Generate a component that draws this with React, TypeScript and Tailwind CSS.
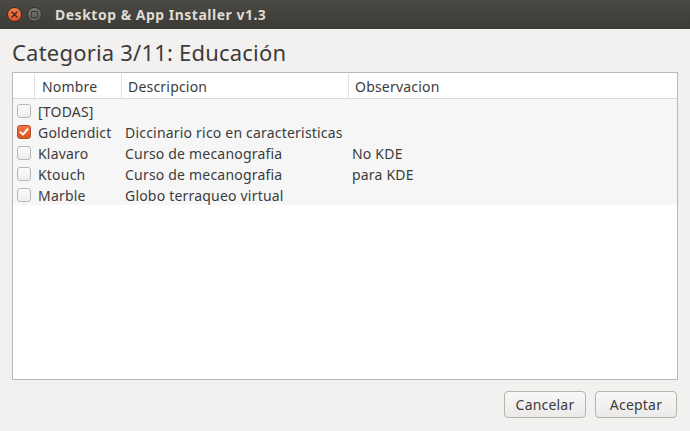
import { useState } from 'react'

type Row = { name: string; desc: string; obs: string; checked: boolean }

const initialRows: Row[] = [
  { name: '[TODAS]', desc: '', obs: '', checked: false },
  { name: 'Goldendict', desc: 'Diccinario rico en caracteristicas', obs: '', checked: true },
  { name: 'Klavaro', desc: 'Curso de mecanografia', obs: 'No KDE', checked: false },
  { name: 'Ktouch', desc: 'Curso de mecanografia', obs: 'para KDE', checked: false },
  { name: 'Marble', desc: 'Globo terraqueo virtual', obs: '', checked: false },
]

function CheckBox({ checked, onClick }: { checked: boolean; onClick: () => void }) {
  if (checked) {
    return (
      <button
        onClick={onClick}
        className="w-[14px] h-[14px] rounded-[3px] border border-[#b5502a] bg-gradient-to-b from-[#f07746] to-[#d9531e] flex items-center justify-center"
      >
        <svg width="10" height="10" viewBox="0 0 10 10">
          <path d="M1.5 5.2 L4 7.6 L8.6 2.2" stroke="white" strokeWidth="1.8" fill="none" strokeLinecap="round" strokeLinejoin="round" />
        </svg>
      </button>
    )
  }
  return (
    <button
      onClick={onClick}
      className="w-[14px] h-[14px] rounded-[3px] border border-[#b9b7b3] bg-gradient-to-b from-[#fbfbfa] to-[#efeeec]"
    />
  )
}

function TitleBar() {
  return (
    <div className="h-[29px] bg-gradient-to-b from-[#4a4944] to-[#3c3b37] flex items-center pl-[7px] shrink-0">
      <div className="w-[15px] h-[15px] rounded-full bg-gradient-to-b from-[#f47f50] to-[#e0541f] border border-[#3a2a20] flex items-center justify-center">
        <svg width="7" height="7" viewBox="0 0 7 7">
          <path d="M1 1 L6 6 M6 1 L1 6" stroke="#3c2a22" strokeWidth="1.4" strokeLinecap="round" />
        </svg>
      </div>
      <div className="ml-[5px] w-[15px] h-[15px] rounded-full bg-gradient-to-b from-[#77766f] to-[#5a5954] border border-[#33322e] flex items-center justify-center">
        <div className="w-[7px] h-[7px] border-[1.5px] border-[#3a3935] rounded-[1px]" />
      </div>
      <div className="ml-[13px] text-[14px] font-bold text-[#dfdbd2] tracking-[0.5px]">
        Desktop &amp; App Installer v1.3
      </div>
    </div>
  )
}

export default function App() {
  const [rows, setRows] = useState(initialRows)

  const toggle = (i: number) => {
    setRows(rows.map((r, j) => (j === i ? { ...r, checked: !r.checked } : r)))
  }

  return (
    <div
      className="w-[690px] h-[431px] flex flex-col bg-[#f2f1f0] overflow-hidden"
      style={{ fontFamily: '"Noto Sans", "Open Sans", sans-serif' }}
    >
      <TitleBar />
      <div className="flex-1 flex flex-col px-[12px]">
        <div className="h-[43px] pt-[8px] text-[22px] leading-[30px] tracking-[0.2px] text-[#3c3c3c]">
          Categoria 3/11: Educación
        </div>
        <div className="h-[308px] border border-[#bab8b4] bg-white flex flex-col text-[14px] tracking-[0.2px] text-[#3c3c3c]">
          <div className="h-[26px] flex border-b border-[#dcdad6] shrink-0 pt-[1px]">
            <div className="w-[22px] border-r border-[#e4e2de]" />
            <div className="w-[87px] border-r border-[#e4e2de] pl-[7px] flex items-center">Nombre</div>
            <div className="w-[227px] border-r border-[#e4e2de] pl-[6px] flex items-center">Descripcion</div>
            <div className="flex-1 pl-[6px] flex items-center">Observacion</div>
          </div>
          <div className="bg-[#f6f6f6] pt-[1px]">
            {rows.map((r, i) => (
              <div key={r.name} className="h-[21px] flex items-center">
                <div className="w-[25px] pl-[4px] flex items-center">
                  <CheckBox checked={r.checked} onClick={() => toggle(i)} />
                </div>
                <div className="w-[87px] pt-[2px]">{r.name}</div>
                <div className="w-[227px] pt-[2px]">{r.desc}</div>
                <div className="flex-1 pt-[2px]">{r.obs}</div>
              </div>
            ))}
          </div>
        </div>
        <div className="flex justify-end gap-[9px] mt-[11px] pr-[1px]">
          <button className="w-[82px] h-[27px] rounded-[4px] border border-[#b5b3ae] bg-gradient-to-b from-[#f8f8f7] to-[#eceae8] text-[14px] tracking-[0.2px] text-[#3c3c3c]">
            Cancelar
          </button>
          <button className="w-[82px] h-[27px] rounded-[4px] border border-[#b5b3ae] bg-gradient-to-b from-[#f8f8f7] to-[#eceae8] text-[14px] tracking-[0.2px] text-[#3c3c3c]">
            Aceptar
          </button>
        </div>
      </div>
    </div>
  )
}
